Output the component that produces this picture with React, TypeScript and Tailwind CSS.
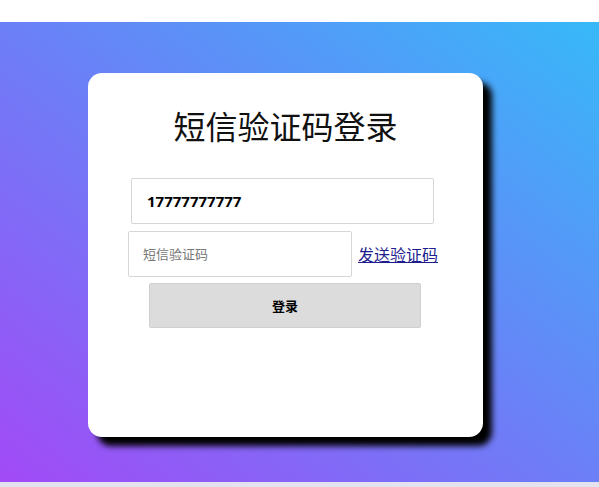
import React from "react";

export default function App() {
  return (
    <div className="w-[599px] h-[487px] flex flex-col bg-white overflow-hidden" style={{ fontFamily: '"Noto Sans", "Noto Sans CJK SC", sans-serif' }}>
      <div className="h-[22px] bg-white shrink-0" />
      <div className="h-[460px] shrink-0 bg-[linear-gradient(to_top_right,#a24af6,#6c7ff7_50%,#37b9f9)] pt-[51px] pl-[88px]">
        <div className="w-[395px] h-[364px] bg-white rounded-[14px] shadow-[9px_9px_6px_#000] flex flex-col">
          <h1 className="mt-[28px] text-center text-[32px] leading-[48px] font-normal text-[#111]" style={{ fontFamily: '"Noto Sans CJK SC", sans-serif' }}>
            短信验证码登录
          </h1>
          <div className="mt-[29px] ml-[43px] w-[303px] h-[46px] border border-[#d6d6d6] rounded-[2px] flex items-center pl-[15px] text-[15px] font-bold text-black">
            17777777777
          </div>
          <div className="mt-[7px] ml-[40px] flex items-center">
            <div className="w-[224px] h-[46px] border border-[#d6d6d6] rounded-[2px] flex items-center pl-[14px] text-[13px] text-[#777]" style={{ fontFamily: '"Noto Sans CJK SC", sans-serif' }}>
              短信验证码
            </div>
            <a href="#" className="ml-[6px] text-[16px] text-[#1d1d8f] underline" style={{ fontFamily: '"Noto Sans CJK SC", sans-serif' }}>
              发送验证码
            </a>
          </div>
          <button className="mt-[6px] ml-[61px] w-[272px] h-[45px] bg-[#dcdcdc] border border-[#cfcfcf] rounded-[2px] text-[13px] font-bold text-black" style={{ fontFamily: '"Noto Sans CJK SC", sans-serif' }}>
            登录
          </button>
        </div>
      </div>
      <div className="h-[5px] shrink-0 bg-[#e4e2ee]" />
    </div>
  );
}
